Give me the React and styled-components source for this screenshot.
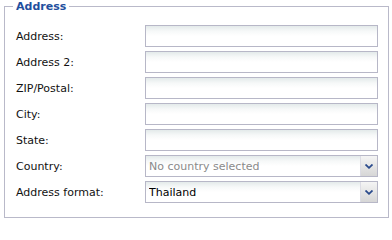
import React from 'react';
import styled, { createGlobalStyle } from 'styled-components';

const GlobalStyle = createGlobalStyle`
  body {
    margin: 0;
    background: #ffffff;
    font-family: 'DejaVu Sans', Verdana, sans-serif;
  }
`;

const Fieldset = styled.fieldset`
  box-sizing: border-box;
  width: 385px;
  margin: 0 0 0 4px;
  padding: 12px 10px 14px 11px;
  border: 1px solid #b9b9c9;
  min-width: 0;
`;

const Legend = styled.legend`
  padding: 0 3px;
  margin-left: -3px;
  font-size: 11px;
  line-height: 13px;
  font-weight: bold;
  color: #1f4f9e;
`;

const Form = styled.div`
  display: grid;
  grid-template-columns: 129px 233px;
  row-gap: 4px;
  align-items: center;
`;

const Label = styled.label`
  font-size: 11px;
  color: #111111;
`;

const fieldBox = `
  box-sizing: border-box;
  height: 22px;
  width: 233px;
  border: 1px solid #b7b7c7;
  background: linear-gradient(to bottom, #e3eaea 0px, #f6f8f8 5px, #ffffff 10px);
`;

const TextInput = styled.input`
  ${fieldBox}
  margin: 0;
  padding: 0 3px;
  font-family: inherit;
  font-size: 11px;
  outline: none;
`;

const Select = styled.div`
  ${fieldBox}
  display: flex;
  align-items: center;
  padding-left: 3px;
  font-size: 11px;
  color: ${p => (p.$disabled ? '#8a8a8a' : '#000000')};
`;

const SelectText = styled.span`
  flex: 1;
  white-space: nowrap;
  overflow: hidden;
`;

const DropButton = styled.span`
  display: flex;
  align-items: center;
  justify-content: center;
  width: 16px;
  align-self: stretch;
  border-left: 1px solid #dcdce4;
  background: linear-gradient(to bottom, #f4f4f4, #d6d6d6);
`;

const Chevron = () => (
  <svg width="8" height="5" viewBox="0 0 8 5">
    <path d="M0.5 0.5 L4 3.8 L7.5 0.5" fill="none" stroke="#2a4a8c" strokeWidth="1.8" />
  </svg>
);

const fields = ['Address:', 'Address 2:', 'ZIP/Postal:', 'City:', 'State:'];

const App = () => {
  return (
    <>
      <GlobalStyle />
      <Fieldset>
        <Legend>Address</Legend>
        <Form>
          {fields.map(f => (
            <React.Fragment key={f}>
              <Label>{f}</Label>
              <TextInput type="text" />
            </React.Fragment>
          ))}
          <Label>Country:</Label>
          <Select $disabled>
            <SelectText>No country selected</SelectText>
            <DropButton><Chevron /></DropButton>
          </Select>
          <Label>Address format:</Label>
          <Select>
            <SelectText>Thailand</SelectText>
            <DropButton><Chevron /></DropButton>
          </Select>
        </Form>
      </Fieldset>
    </>
  );
};

export default App;
